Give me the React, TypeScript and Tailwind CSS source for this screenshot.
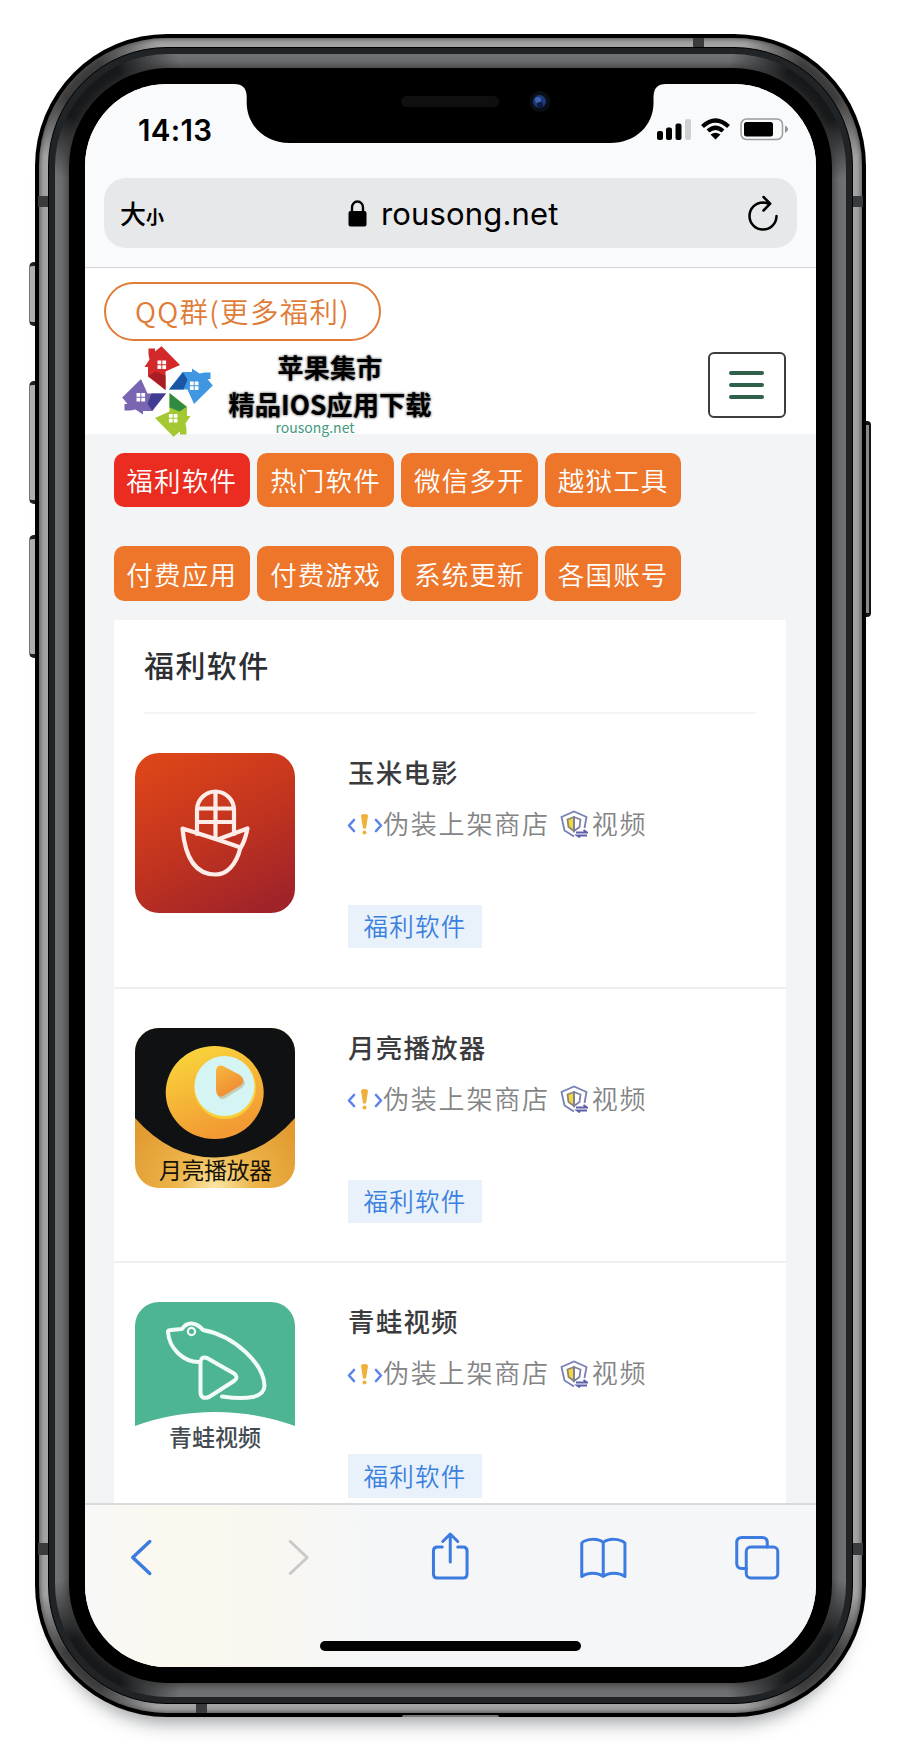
import React from 'react';

const APPS = ['玉米电影', '月亮播放器', '青蛙视频'];
const ROWS = [
  ['福利软件', '热门软件', '微信多开', '越狱工具'],
  ['付费应用', '付费游戏', '系统更新', '各国账号'],
];

function StatusIcons() {
  return (
    <svg className="mt-[33px] ml-auto h-6 w-[134px] shrink-0" viewBox="656 117 134 24" fill="none">
      <rect x="657" y="131" width="6" height="9" rx="2" fill="#000" />
      <rect x="666" y="127.500" width="6" height="12.500" rx="2" fill="#000" />
      <rect x="675.500" y="123.500" width="6" height="16.500" rx="2" fill="#000" />
      <rect x="685" y="119" width="6" height="21" rx="2" fill="#cfd0d1" />
      <path d="M702.500 126.500Q715.500 114.500 728.500 126.500M708 131Q715.500 124.500 723 131" stroke="#000" strokeWidth="4.200" />
      <path d="M710.500 134.500Q715.500 131 720.500 134.500L715.500 139.500Z" fill="#000" />
      <rect x="741" y="119" width="41.500" height="20.500" rx="5.500" stroke="#9b9c9e" strokeWidth="1.500" />
      <rect x="744" y="122" width="29" height="14.500" rx="2.500" fill="#000" />
      <path d="M785 125.500Q788 127 788 129.200Q788 131.500 785 133Z" fill="#909193" />
    </svg>
  );
}

function House({ fill, dark, angle }: { fill: string; dark: string; angle: number }) {
  return (
    <g transform={`rotate(${angle} 168 391)`}>
      <path d="M166 389.500L148.500 376V366.500H145L150 359L149 354V348H155.500V351L162 345.700L180.500 364.500L176 366.500L166 371Z" fill={fill} />
      <path d="M149 375.500L156 371L166 375V389.500Z" fill={dark} />
      <path d="M158 360h3.800v3.800h-3.800zM162.800 360h3.800v3.800h-3.800zM158 364.800h3.800v3.800h-3.800zM162.800 364.800h3.800v3.800h-3.800z" fill="#fff" />
    </g>
  );
}

function Logo() {
  return (
    <svg className="mt-[5px] ml-[37px] h-[91px] w-[91px] shrink-0" viewBox="122.500 345.500 91 91">
      <House fill="#d3292a" dark="#a81d25" angle={0} />
      <House fill="#3f97e2" dark="#1b56a4" angle={90} />
      <House fill="#a3c832" dark="#2f8b43" angle={180} />
      <House fill="#7a65b3" dark="#413b91" angle={270} />
    </svg>
  );
}

function CornIcon() {
  return (
    <svg className="h-40 w-40 rounded-[24px]" viewBox="0 0 160 160">
      <defs>
        <linearGradient id="corn" x1="0.250" y1="0" x2="0.750" y2="1">
          <stop offset="0" stopColor="#dc4519" />
          <stop offset="0.500" stopColor="#c2341f" />
          <stop offset="1" stopColor="#a0232a" />
        </linearGradient>
      </defs>
      <rect width="160" height="160" fill="url(#corn)" />
      <g fill="none" stroke="#fdece8" strokeWidth="4.200" strokeLinejoin="round" strokeLinecap="round">
        <path d="M62 81V57a18.500 18.500 0 0 1 37 0V81M80.500 39V85M62 55.500H99M62 69H99" />
        <path d="M47.500 75.500C58 79 75 84 105.500 94.500C101 113 91 121.500 80.500 121.500C60 121.500 50 104 47.500 75.500ZM84 86L112.500 75.500Q110 88 105.500 95" />
      </g>
    </svg>
  );
}

function MoonIcon() {
  return (
    <svg className="h-40 w-40 rounded-[24px]" viewBox="0 0 160 160">
      <defs>
        <radialGradient id="gold" cx="0.500" cy="1" r="0.600">
          <stop offset="0" stopColor="#fbe7a6" />
          <stop offset="0.400" stopColor="#edb54a" />
          <stop offset="1" stopColor="#e19a30" />
        </radialGradient>
        <linearGradient id="moon" x1="0" y1="0" x2="0.400" y2="1">
          <stop offset="0" stopColor="#fadb3c" />
          <stop offset="1" stopColor="#f29a33" />
        </linearGradient>
        <linearGradient id="play" x1="0" y1="0" x2="0.500" y2="1">
          <stop offset="0" stopColor="#f6b93a" />
          <stop offset="1" stopColor="#f08a35" />
        </linearGradient>
      </defs>
      <rect width="160" height="160" fill="url(#gold)" />
      <path d="M0 0H160V90Q125 129.500 80 129.500Q35 129.500 0 90Z" fill="#0f1112" />
      <ellipse cx="79.700" cy="64.500" rx="49" ry="46.500" fill="url(#moon)" />
      <circle cx="90" cy="60" r="31" fill="#f9cf38" />
      <circle cx="89.500" cy="58" r="30" fill="#d4f5f3" />
      <path d="M88 38Q81 36 81 44V62Q82 72 90 67L106 57Q111 52 105 47Z" fill="#c5cdb8" transform="translate(1.500 2.500)" />
      <path d="M88 38Q81 36 81 44V62Q82 72 90 67L106 57Q111 52 105 47Z" fill="url(#play)" />
      <text x="80.500" y="151" textAnchor="middle" textLength="113" fontSize="23" fill="#171208" className="font-['Noto_Sans_CJK_SC',sans-serif]">月亮播放器</text>
    </svg>
  );
}

function FrogIcon() {
  return (
    <svg className="h-40 w-40 rounded-t-[24px]" viewBox="0 0 160 160">
      <path d="M0 0H160V124Q122 110 80 110Q38 110 0 124Z" fill="#4eb594" />
      <g fill="none" stroke="#f1fbf7" strokeWidth="4" strokeLinejoin="round" strokeLinecap="round">
        <path d="M64 60C48 60 34 46 33 30Q33 28 36 28L47 27Q51 21 57 21.500Q63 22 68 28C100 34 129 62 129.500 84C129 96 112 98 87 94.500" />
        <path d="M65.500 60Q66 54 72 56L99 71.500Q104 75 99 79L74 95Q65.500 98 65.500 90Z" />
        <circle cx="56.500" cy="29.500" r="3.600" strokeWidth="2.200" />
      </g>
      <text x="80" y="144" textAnchor="middle" textLength="92" fontSize="23" fontWeight="500" fill="#444b50" className="font-['Noto_Sans_CJK_SC',sans-serif]">青蛙视频</text>
    </svg>
  );
}

const ICONS = [CornIcon, MoonIcon, FrogIcon];

function CodeIcon() {
  return (
    <svg className="mt-[3px] -ml-px h-6 w-[36px] shrink-0" viewBox="0 0 36 24" fill="none" strokeLinecap="round" strokeLinejoin="round">
      <path d="M7 8L2 13.500L7 19M29 8L34 13.500L29 19" stroke="#5b82ea" strokeWidth="2.600" />
      <path d="M14 4Q14 2 17.500 2Q21 2 21 4L19 16.500H16Z" fill="#efb03c" />
      <circle cx="17.500" cy="20.500" r="2" fill="#efb03c" />
    </svg>
  );
}

function ShieldIcon() {
  return (
    <svg className="mt-[3px] ml-[10px] h-7 w-[28px] shrink-0" viewBox="0 0 28 28" fill="none" strokeWidth="1.800">
      <path d="M14 26.500L4.500 20.500L1.500 7L14 1.500L26.500 7L24.500 18" stroke="#7880b5" />
      <path d="M14 7L7.500 9.500L8.500 17L14 21Z" fill="#f2d83a" stroke="#8b8770" />
      <path d="M14 7L20.500 9.500L19.500 17L14 21Z" stroke="#7d80a4" />
      <path d="M16 22.500H27L23.500 20M27 25.500H17L20 27.500" stroke="#5d5fa8" />
    </svg>
  );
}

function AppItem({ index }: { index: number }) {
  const Icon = ICONS[index];
  return (
    <div className="flex h-[274.700px] shrink-0 border-b-2 border-[#eeeff1] pl-[21px]">
      <div className="pt-[39px]"><Icon /></div>
      <div className="ml-[53px] flex flex-col items-start">
        <div className="mt-[38px] h-10 text-[26.500px] leading-10 font-medium tracking-[1.200px] whitespace-nowrap text-[#3b3b3d]">{APPS[index]}</div>
        <div className="mt-[11px] flex h-10 items-center text-[26px] leading-10 font-[350] tracking-[1.800px] whitespace-nowrap text-[#838486]">
          <CodeIcon />
          <span>伪装上架商店</span>
          <ShieldIcon />
          <span className="ml-[4px]">视频</span>
        </div>
        <div className="mt-[62px] flex h-[43.500px] w-[134px] items-center justify-center bg-[#e9f1fb] text-[24.500px] font-[350] tracking-[1.300px] text-[#3a80de]">福利软件</div>
      </div>
    </div>
  );
}

function Toolbar() {
  return (
    <div className="flex h-[164px] shrink-0 flex-col items-center border-t-2 border-[#d9dadc] bg-[linear-gradient(90deg,#f8f8f7_0%,#fbf8ee_12%,#f9f7f0_24%,#f5f6f7_38%,#f5f6f8_100%)]">
      <svg className="h-[100px] w-full shrink-0" viewBox="85 1505 730 100" fill="none" stroke="#3c7be0" strokeWidth="3" strokeLinecap="round" strokeLinejoin="round">
        <path d="M149.500 1541.500L132.500 1557.500L149.500 1573.500" strokeWidth="3.500" />
        <path d="M290 1541.500L307 1557.500L290 1573.500" stroke="#c9c9c8" />
        <path d="M442 1547H437Q433.200 1547 433.200 1551V1574Q433.200 1578 437 1578H463Q466.800 1578 466.800 1574V1551Q466.800 1547 463 1547H457.500M450 1562V1534.500M442.500 1541.500L450 1534L457.500 1541.500" />
        <path d="M603 1542.500C598 1538 586 1538.500 581.500 1543V1576.500C587 1572 598 1572 603 1576.500C608 1572 619 1572 624.700 1576.500V1543C620 1538.500 608 1538 603 1542.500ZM603 1542.500V1576" />
        <path d="M746 1568.500H741.500Q736.500 1568.500 736.500 1563.500V1542.500Q736.500 1537.500 741.500 1537.500H762Q767 1537.500 767 1542.500V1547" />
        <rect x="746" y="1547" width="31.500" height="31" rx="4.500" />
      </svg>
      <div className="mt-[36px] h-[10px] w-[261px] rounded-full bg-black" />
    </div>
  );
}

export default function App() {
  return (
    <div className="relative h-[1751px] w-[900px] overflow-hidden bg-white pt-[34px] pl-[35px] font-['Inter','Noto_Sans_CJK_SC',sans-serif]">
      <div className="absolute top-[262px] left-[29px] h-[64px] w-[12px] rounded-[5px] border-y-4 border-l border-y-[#222] border-l-[#777] bg-[#b0b0b0]" />
      <div className="absolute top-[381px] left-[29px] h-[123px] w-[12px] rounded-[5px] border-y-4 border-l border-y-[#222] border-l-[#777] bg-[#b0b0b0]" />
      <div className="absolute top-[535px] left-[29px] h-[123px] w-[12px] rounded-[5px] border-y-4 border-l border-y-[#222] border-l-[#777] bg-[#b0b0b0]" />
      <div className="absolute top-[421px] left-[860px] h-[196px] w-[11px] rounded-[4px] border-y-4 border-r-2 border-[#151515] bg-[#8c8c8c]" />
      <div className="relative h-[1682.500px] w-[830.500px] rounded-[132px] bg-black p-[3.500px] shadow-[0_22px_18px_-16px_rgba(60,65,70,0.500)]">
        <div className="h-full rounded-[128px] bg-[radial-gradient(circle_at_40px_40px,#3c3c3c_0_25px,transparent_85px),radial-gradient(circle_at_784px_40px,#3c3c3c_0_25px,transparent_85px),radial-gradient(circle_at_40px_1635px,#3c3c3c_0_25px,transparent_85px),radial-gradient(circle_at_784px_1635px,#3c3c3c_0_25px,transparent_85px),linear-gradient(#a4a4a4,#a4a4a4)] p-[9px] shadow-[inset_0_0_5px_1px_#505050]">
          <div className="h-full rounded-[119px] border border-black bg-[#202426] p-[6px]">
            <div className="h-full rounded-[113px] bg-[radial-gradient(circle_at_32px_32px,#17191a_0_35px,transparent_95px),radial-gradient(circle_at_766px_32px,#17191a_0_35px,transparent_95px),radial-gradient(circle_at_32px_1618px,#17191a_0_35px,transparent_95px),radial-gradient(circle_at_766px_1618px,#17191a_0_35px,transparent_95px),linear-gradient(#707173,#707173)] p-[14px]">
              <div className="h-full rounded-[99px] bg-black p-[16.500px] shadow-[0_0_10px_1px_#333]">
                <div className="flex h-full w-full flex-col overflow-hidden rounded-[82px] bg-white">
                  <div className="flex h-[184px] shrink-0 flex-col border-b border-[#d0d3d7] bg-[#f9fafc] px-[19px]">
                    <div className="flex h-[94px] shrink-0">
                      <div className="mt-[26px] ml-[34px] text-[29.500px] leading-[40px] font-semibold tracking-[0.300px] whitespace-nowrap">14:13</div>
                      <StatusIcons />
                      <div className="w-[7px]" />
                    </div>
                    <div className="flex h-[70px] items-center rounded-[22px] bg-[#e7e8ea] pr-[19px] pl-4">
                      <div className="flex w-[228px] items-baseline font-['Noto_Sans_CJK_SC',sans-serif] leading-none font-medium"><span className="text-[26px]">大</span><span className="text-[18px] font-bold">小</span></div>
                      <svg className="h-[27px] w-[19px]" viewBox="0 0 19 27"><rect x="0.500" y="11" width="18" height="15.500" rx="2" /><path d="M4 12V7.500a5.500 6 0 0 1 11 0V12" fill="none" stroke="#000" strokeWidth="2.400" /></svg>
                      <div className="ml-[14px] pt-[2px] text-[31px] tracking-[0.150px] whitespace-nowrap">rousong.net</div>
                      <svg className="ml-auto h-9 w-[30px] shrink-0" viewBox="748 195 30 36" fill="none" stroke="#000" strokeWidth="2.500" strokeLinecap="round" strokeLinejoin="round"><path d="M776.500 216A13.500 13.500 0 1 1 763 202.500L769.500 203.500M763.500 197L770.200 203.700L763.500 210.500" /></svg>
                    </div>
                  </div>
                  <div className="flex h-[1234.500px] shrink-0 flex-col overflow-hidden bg-[#f2f4f6] font-['Noto_Sans_CJK_SC',sans-serif]">
                    <div className="h-[165.500px] shrink-0 bg-white">
                      <div className="mt-[13.500px] ml-[19px] flex h-[59px] w-[277px] items-center justify-center rounded-full border-2 border-[#e07b38] text-[28.500px] font-[350] tracking-[1.300px] whitespace-nowrap text-[#e07b38]">QQ群(更多福利)</div>
                      <div className="flex">
                        <Logo />
                        <div className="ml-[15px] flex w-[204px] flex-col items-center pt-[8px] font-bold whitespace-nowrap text-black [text-shadow:0_0_3px_#777,0_0_2px_#888]">
                          <div className="text-[26px] leading-[36px] tracking-[0.300px]">苹果集市</div>
                          <div className="text-[26.300px] leading-[37px]">精品IOS应用下载</div>
                          <div className="mr-[30px] text-[14px] leading-[10px] font-normal text-[#3f9a7d] [text-shadow:none]">rousong.net</div>
                        </div>
                        <div className="mt-[11.500px] mr-[30px] ml-auto flex h-[66px] w-[78px] shrink-0 flex-col items-center justify-center gap-[7.700px] rounded-md border-2 border-[#3b3d40]">
                          <div className="h-1 w-[35px] rounded-full bg-[#2f6049]" />
                          <div className="h-1 w-[35px] rounded-full bg-[#2f6049]" />
                          <div className="h-1 w-[35px] rounded-full bg-[#2f6049]" />
                        </div>
                      </div>
                    </div>
                    {ROWS.map((row, r) => (
                      <div key={r} className={r === 0 ? 'mt-[19px] ml-[28.500px] flex gap-[7.300px]' : 'mt-[39px] ml-[28.500px] flex gap-[7.300px]'}>
                        {row.map((label, i) => (
                          <div key={label} className={`flex h-[54.700px] w-[136.500px] items-center justify-center rounded-[10px] text-[26.500px] font-[350] tracking-[1.200px] text-white ${r === 0 && i === 0 ? 'bg-[#ea2d20]' : 'bg-[#ed762b]'}`}>{label}</div>
                        ))}
                      </div>
                    ))}
                    <div className="mt-[19.500px] ml-[29px] flex w-[672px] flex-col bg-white">
                      <div className="mx-[30px] h-[93.500px] shrink-0 border-b-2 border-[#f3f4f5] pt-[19px] text-[30px] leading-[50px] font-medium tracking-[1.400px] text-[#2d2f33]">福利软件</div>
                      {APPS.map((a, i) => (
                        <AppItem key={a} index={i} />
                      ))}
                    </div>
                  </div>
                  <Toolbar />
                </div>
              </div>
            </div>
          </div>
        </div>
        <div className="absolute top-[162px] left-[3px] h-[11px] w-[10px] bg-[#393b3d]" />
        <div className="absolute top-[162px] right-[3px] h-[11px] w-[10px] bg-[#393b3d]" />
        <div className="absolute top-[1509px] left-[3px] h-[12px] w-[10px] bg-[#393b3d]" />
        <div className="absolute top-[1509px] right-[3px] h-[12px] w-[10px] bg-[#393b3d]" />
        <div className="absolute top-[4px] left-[658px] h-[9px] w-[11px] bg-[#393b3d]" />
        <div className="absolute bottom-[4px] left-[161px] h-[9px] w-[11px] bg-[#393b3d]" />
        <div className="absolute bottom-0 left-[367px] h-[2px] w-[97px] rounded-t bg-[#777]" />
        <svg className="absolute top-[49px] left-[199px] h-[61px] w-[432px]" viewBox="234 83 432 61">
          <path d="M234 83V84Q246.700 84 246.700 97V103C247 125 264 143 290 143H610C636 143 653.500 125 653.500 103V97Q653.500 84 666 84V83Z" />
          <rect x="401" y="96" width="98" height="11" rx="5.500" fill="#0f0f0f" />
          <circle cx="540" cy="101.500" r="10.500" fill="#0a0e14" />
          <circle cx="539.500" cy="101.500" r="6.500" fill="#1d3a78" />
          <circle cx="538" cy="100" r="3" fill="#3c63ae" />
          <circle cx="540" cy="105" r="3" fill="#0d1c40" />
        </svg>
      </div>
    </div>
  );
}
